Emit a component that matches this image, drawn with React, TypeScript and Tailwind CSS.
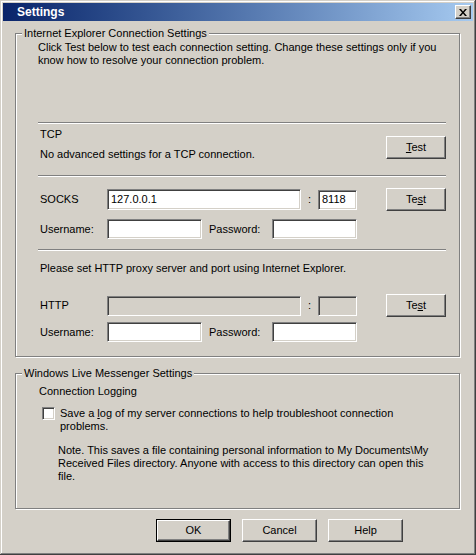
import React from "react";

const font = { fontFamily: '"Liberation Sans", Arial, sans-serif' };

const Sunken = ({ w, disabled, value }: { w: string; disabled?: boolean; value?: string }) => (
  <div
    className={`${w} h-[20px] border border-t-[#808080] border-l-[#808080] border-b-white border-r-white shadow-[inset_1px_1px_0_#404040,inset_-1px_-1px_0_#d4d0c8] ${
      disabled ? "bg-[#d4d0c8]" : "bg-white"
    } flex items-center pl-[3px] text-black`}
  >
    {value}
  </div>
);

const Button = ({ children, w, isDefault }: { children: React.ReactNode; w: string; isDefault?: boolean }) => (
  <div className={`${w} h-[23px] ${isDefault ? "border border-black" : ""}`}>
    <div className="w-full h-full border border-t-white border-l-white border-b-[#404040] border-r-[#404040] shadow-[inset_-1px_-1px_0_#808080] flex items-center justify-center text-black">
      {children}
    </div>
  </div>
);

const Separator = ({ className }: { className?: string }) => (
  <div className={`h-[2px] border-t border-t-[#808080] border-b border-b-white ${className ?? ""}`} />
);

const GroupBox = ({ title, className, children }: { title: string; className?: string; children: React.ReactNode }) => (
  <div className={`relative border border-[#808080] shadow-[inset_1px_1px_0_#fff,1px_1px_0_#fff] ${className ?? ""}`}>
    <span className="absolute -top-[7px] left-[6px] bg-[#d4d0c8] px-[2px] leading-[13px]">{title}</span>
    {children}
  </div>
);

export default function App() {
  return (
    <div
      className="w-[476px] h-[555px] bg-[#d4d0c8] p-[3px] shadow-[inset_-1px_-1px_0_#404040,inset_1px_1px_0_#d4d0c8,inset_-2px_-2px_0_#808080,inset_2px_2px_0_#fff] text-[11px] leading-[13px] text-black"
      style={font}
    >
      {/* title bar */}
      <div className="h-[18px] bg-gradient-to-r from-[#0a246a] to-[#a6caf0] flex items-center justify-between pl-[14px] pr-[2px]">
        <span className="text-white font-bold text-[12px]">Settings</span>
        <div className="w-[16px] h-[14px] bg-[#d4d0c8] border border-t-white border-l-white border-b-[#404040] border-r-[#404040] shadow-[inset_-1px_-1px_0_#808080] flex items-center justify-center">
          <svg width="8" height="7" viewBox="0 0 8 7">
            <path d="M0 0h2l2 2.5L6 0h2L5 3.5 8 7H6L4 4.5 2 7H0l3-3.5z" fill="#000" />
          </svg>
        </div>
      </div>

      <div className="pl-[12px] pr-[13px]">
        {/* Internet Explorer group */}
        <GroupBox title="Internet Explorer Connection Settings" className="mt-[12px] h-[324px]">
          <div className="pl-[22px] pr-[13px] pt-[7px]">
            <p>
              Click Test below to test each connection setting. Change these settings only if you
              <br />
              know how to resolve your connection problem.
            </p>

            <Separator className="mt-[55px]" />

            <div className="flex justify-between mt-[4px]">
              <div className="pl-[2px]">
                <div>TCP</div>
                <div className="mt-[7px]">No advanced settings for a TCP connection.</div>
              </div>
              <div className="mt-[8px]">
                <Button w="w-[60px]">
                  <span>
                    <u>T</u>est
                  </span>
                </Button>
              </div>
            </div>

            <Separator className="mt-[14px]" />

            <div className="flex items-center justify-between mt-[11px] h-[23px]">
              <div className="flex items-center">
                <span className="w-[69px] pl-[2px]">SOCKS</span>
                <Sunken w="w-[194px] h-[21px]" value="127.0.0.1" />
                <span className="w-[17px] text-center">:</span>
                <Sunken w="w-[39px]" value="8118" />
              </div>
              <Button w="w-[60px]">
                <span>
                  Te<u>s</u>t
                </span>
              </Button>
            </div>

            <div className="flex items-center mt-[8px]">
              <span className="w-[69px] pl-[2px]">Username:</span>
              <Sunken w="w-[95px]" />
              <span className="w-[70px] pl-[7px]">Password:</span>
              <Sunken w="w-[85px]" />
            </div>

            <Separator className="mt-[10px]" />

            <p className="mt-[11px] pl-[2px]">Please set HTTP proxy server and port using Internet Explorer.</p>

            <div className="flex items-center justify-between mt-[19px] h-[23px]">
              <div className="flex items-center">
                <span className="w-[69px] pl-[2px]">HTTP</span>
                <Sunken w="w-[194px]" disabled />
                <span className="w-[17px] text-center">:</span>
                <Sunken w="w-[39px]" disabled />
              </div>
              <Button w="w-[60px]">
                <span>
                  Te<u>s</u>t
                </span>
              </Button>
            </div>

            <div className="flex items-center mt-[5px]">
              <span className="w-[69px] pl-[2px]">Username:</span>
              <Sunken w="w-[95px]" />
              <span className="w-[70px] pl-[7px]">Password:</span>
              <Sunken w="w-[85px]" />
            </div>
          </div>
        </GroupBox>

        {/* Messenger group */}
        <GroupBox title="Windows Live Messenger Settings" className="mt-[16px] h-[136px]">
          <div className="pl-[23px] pt-[11px]">
            <div>Connection Logging</div>
            <div className="flex items-start mt-[9px] pl-[3px]">
              <div className="w-[13px] h-[13px] bg-white border border-t-[#808080] border-l-[#808080] border-b-white border-r-white shadow-[inset_1px_1px_0_#404040,inset_-1px_-1px_0_#d4d0c8]" />
              <p className="ml-[5px]">
                Save a <u>l</u>og of my server connections to help troubleshoot connection
                <br />
                problems.
              </p>
            </div>
            <p className="mt-[11px] pl-[19px]">
              Note. This saves a file containing personal information to My Documents\My
              <br />
              Received Files directory. Anyone with access to this directory can open this
              <br />
              file.
            </p>
          </div>
        </GroupBox>
      </div>

      {/* buttons */}
      <div className="flex gap-[11px] ml-[153px] mt-[10px]">
        <Button w="w-[75px]" isDefault>
          OK
        </Button>
        <Button w="w-[75px]">Cancel</Button>
        <Button w="w-[75px]">Help</Button>
      </div>
    </div>
  );
}
